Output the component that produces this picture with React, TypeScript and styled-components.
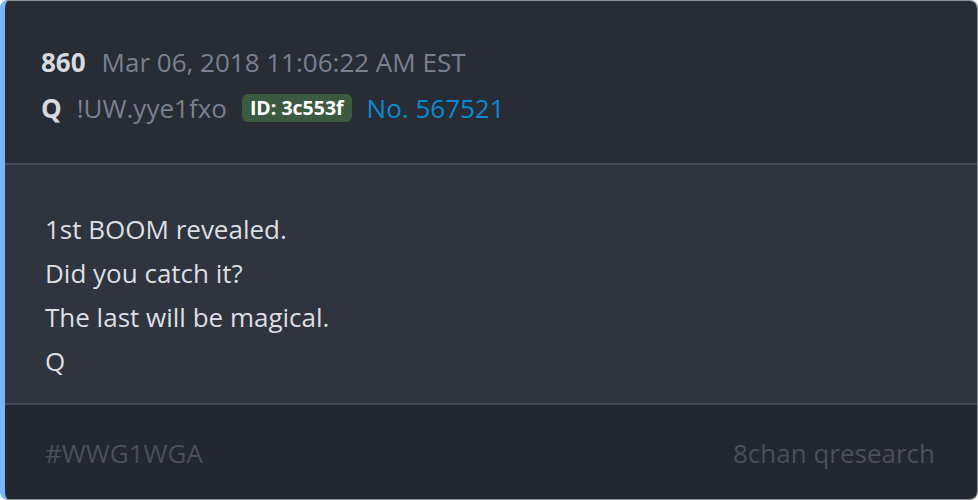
import React from "react";
import styled, { createGlobalStyle } from "styled-components";

const Global = createGlobalStyle`
  html, body { margin: 0; padding: 0; background: #ffffff; }
  body { font-family: "Open Sans", "Noto Sans", sans-serif; }
`;

const Card = styled.article`
  box-sizing: border-box;
  width: 978px;
  height: 500px;
  border: 1px solid #8b909a;
  border-left: 5px solid #76b6fb;
  border-radius: 8px;
  overflow: hidden;
  display: flex;
  flex-direction: column;
  font-size: 26px;
`;

const Header = styled.header`
  background: #282c35;
  padding: 38px 36px 32px;
  border-bottom: 2px solid #454a55;
  display: flex;
  flex-direction: column;
`;

const MetaRow = styled.div<{ $gap: number }>`
  display: flex;
  align-items: center;
  gap: ${(p) => p.$gap}px;
  line-height: 46px;
  white-space: nowrap;
`;

const Strong = styled.span`
  font-weight: 700;
  color: #d8dadf;
`;

const Muted = styled.span`
  color: #7b8090;
`;

const Badge = styled.span`
  background: #3c5a40;
  color: #ffffff;
  font-weight: 700;
  font-size: 19.5px;
  line-height: 28px;
  padding: 0 8px;
  border-radius: 6px;
`;

const PostLink = styled.span`
  color: #0a8bd1;
`;

const Body = styled.div`
  flex: 1;
  background: #2f343e;
  padding: 42px 40px 17px;
  border-bottom: 2px solid #454a55;
`;

const Line = styled.p`
  margin: 0;
  color: #dcdfe4;
  line-height: 44px;
`;

const Footer = styled.footer`
  background: #23272f;
  padding: 26px 42px 24px 40px;
  display: flex;
  justify-content: space-between;
  line-height: 44px;
  color: #4a4f5b;
`;

export default function App() {
  return (
    <>
      <Global />
      <Card>
        <Header>
          <MetaRow $gap={16}>
            <Strong>860</Strong>
            <Muted>Mar 06, 2018 11:06:22 AM EST</Muted>
          </MetaRow>
          <MetaRow $gap={15}>
            <Strong>Q</Strong>
            <Muted>!UW.yye1fxo</Muted>
            <Badge>ID: 3c553f</Badge>
            <PostLink>No. 567521</PostLink>
          </MetaRow>
        </Header>
        <Body>
          <Line>1st BOOM revealed.</Line>
          <Line>Did you catch it?</Line>
          <Line>The last will be magical.</Line>
          <Line>Q</Line>
        </Body>
        <Footer>
          <span>#WWG1WGA</span>
          <span>8chan qresearch</span>
        </Footer>
      </Card>
    </>
  );
}
